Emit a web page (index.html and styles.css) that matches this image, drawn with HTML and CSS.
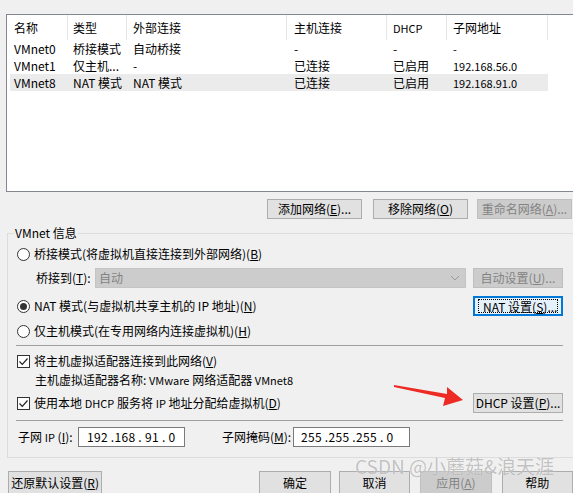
FILE: index.html
```html
<!DOCTYPE html>
<html>
<head>
<meta charset="utf-8">
<link rel="stylesheet" href="styles.css">
</head>
<body>
<div class="page">
  <div class="list">
    <div class="hdr">
      <div class="hc c1">名称</div>
      <div class="hc c2">类型</div>
      <div class="hc c3">外部连接</div>
      <div class="hc c4">主机连接</div>
      <div class="hc c5">DHCP</div>
      <div class="hc c6">子网地址</div>
    </div>
    <div class="row">
      <div class="rc c1">VMnet0</div>
      <div class="rc c2">桥接模式</div>
      <div class="rc c3">自动桥接</div>
      <div class="rc c4">-</div>
      <div class="rc c5">-</div>
      <div class="rc c6">-</div>
    </div>
    <div class="row">
      <div class="rc c1">VMnet1</div>
      <div class="rc c2">仅主机...</div>
      <div class="rc c3">-</div>
      <div class="rc c4">已连接</div>
      <div class="rc c5">已启用</div>
      <div class="rc c6">192.168.56.0</div>
    </div>
    <div class="row sel">
      <div class="rc c1">VMnet8</div>
      <div class="rc c2">NAT 模式</div>
      <div class="rc c3">NAT 模式</div>
      <div class="rc c4">已连接</div>
      <div class="rc c5">已启用</div>
      <div class="rc c6">192.168.91.0</div>
    </div>
  </div>

  <div class="netbtns">
    <div class="btn w95">添加网络(<u>E</u>)...</div>
    <div class="btn w95">移除网络(<u>O</u>)</div>
    <div class="btn w95 dis">重命名网络(<u>A</u>)...</div>
  </div>

  <fieldset class="group">
    <legend class="gl">VMnet 信息</legend>
    <div class="gin">
      <div class="line r1">
        <span class="radio"></span><span class="lbl">桥接模式(将虚拟机直接连接到外部网络)(<u>B</u>)</span>
      </div>
      <div class="line r2">
        <span class="blbl">桥接到(<u>T</u>):</span>
        <div class="combo"><span class="ctext">自动</span>
          <svg class="chev" width="10" height="6" viewBox="0 0 10 6"><path d="M1 1 L5 5 L9 1" fill="none" stroke="#9a9a9a" stroke-width="1"/></svg>
        </div>
        <div class="btn w90 dis">自动设置(<u>U</u>)...</div>
      </div>
      <div class="line r3">
        <span class="radio on"><span class="dot"></span></span><span class="lbl">NAT 模式(与虚拟机共享主机的 IP 地址)(<u>N</u>)</span>
        <div class="btn w90 focus"><span class="fr">NAT 设置(<u>S</u>)...</span></div>
      </div>
      <div class="line r4">
        <span class="radio"></span><span class="lbl">仅主机模式(在专用网络内连接虚拟机)(<u>H</u>)</span>
      </div>
      <div class="sep s1"></div>
      <div class="line r5">
        <span class="check"><svg width="11" height="11" viewBox="0 0 11 11"><path d="M1.5 5.5 L4.3 8.3 L9.5 2.5" fill="none" stroke="#222" stroke-width="1.2"/></svg></span><span class="lbl">将主机虚拟适配器连接到此网络(<u>V</u>)</span>
      </div>
      <div class="line r6">
        <span class="aname">主机虚拟适配器名称: <span class="sm">VMware</span> 网络适配器 <span class="sm">VMnet8</span></span>
      </div>
      <div class="line r7">
        <span class="check"><svg width="11" height="11" viewBox="0 0 11 11"><path d="M1.5 5.5 L4.3 8.3 L9.5 2.5" fill="none" stroke="#222" stroke-width="1.2"/></svg></span><span class="lbl">使用本地 <span class="sm">DHCP</span> 服务将 <span class="sm">IP</span> 地址分配给虚拟机(<u>D</u>)</span>
        <div class="btn w90">DHCP 设置(<u>P</u>)...</div>
      </div>
      <div class="sep s2"></div>
      <div class="line r8">
        <span class="slbl">子网 <span class="sm">IP</span> (<u>I</u>):</span>
        <div class="ipbox ip1">192 .168 . 91 . 0</div>
        <span class="mlbl">子网掩码(<u>M</u>):</span>
        <div class="ipbox ip2">255 .255 .255 . 0</div>
      </div>
    </div>
  </fieldset>

  <div class="bottom">
    <div class="btn w95 b1">还原默认设置(<u>R</u>)</div>
    <div class="btn w72 b2">确定</div>
    <div class="btn w72 b3">取消</div>
    <div class="btn w72 b4 dis">应用(<u>A</u>)</div>
    <div class="btn w72 b5">帮助</div>
  </div>

  <svg class="arrow" width="80" height="30" viewBox="0 0 80 30">
    <polygon points="4,5 57,14 57,7 73,20 53,26 55,18 4,7" fill="#ee2a24"/>
  </svg>
  <div class="wm">CSDN @小蘑菇&amp;浪天涯</div>
</div>
</body>
</html>
```

FILE: styles.css
```css
html, body {
  margin: 0;
  padding: 0;
}
body {
  background: #f0f0f0;
  width: 573px;
  height: 493px;
  overflow: hidden;
  font-family: "Noto Sans CJK SC", "Microsoft YaHei", sans-serif;
  font-size: 12px;
  color: #000;
}
.page {
  position: relative;
  width: 573px;
  height: 493px;
  padding-top: 14px;
  box-sizing: border-box;
}
u { text-decoration: underline; text-underline-offset: 1px; }

.list {
  margin-left: 6px;
  width: 600px;
  height: 178px;
  box-sizing: border-box;
  border: 1px solid #828790;
  background: #fff;
}
.hdr {
  display: flex;
  height: 25px;
  align-items: stretch;
}
.hc {
  box-sizing: border-box;
  border-right: 1px solid #e5e5e5;
  padding-left: 6px;
  display: flex;
  align-items: center;
  line-height: 14px;
  padding-top: 1px;
}
.hc.c1 { width: 61px; padding-left: 7px; }
.hc.c2 { width: 59px; padding-left: 5px; }
.c3 { width: 160px; }
.c4 { width: 100px; }
.c5 { width: 60px; }
.c6 { width: 101px; }
.hc.c4 { padding-left: 7px; }
.hc.c5 { font-size: 11px; }
.row {
  display: flex;
  height: 17px;
  margin-left: 3px;
  width: 538px;
  align-items: center;
  line-height: 14px;
}
.row.sel { background: #ebebeb; }
.rc { box-sizing: border-box; padding-left: 6px; white-space: nowrap; }
.rc.c1 { width: 58px; padding-left: 4px; }
.rc.c2 { width: 59px; padding-left: 5px; }
.rc.c4 { padding-left: 7px; }
.rc.c6 { font-size: 11px; }

.btn {
  box-sizing: border-box;
  height: 20px;
  border: 1px solid #adadad;
  background: #e1e1e1;
  display: flex;
  align-items: center;
  justify-content: center;
  white-space: nowrap;
  line-height: 14px;
}
.btn.dis {
  background: #cccccc;
  border-color: #bfbfbf;
  color: #838383;
}
.btn.focus {
  background: #e5f1fb;
  border: 2px solid #0078d7;
}
.btn.focus .fr {
  border: 1px dotted #000;
  padding: 1px 4px;
  width: 80px;
  box-sizing: border-box;
  text-align: center;
  height: 14px;
  line-height: 12px;
}
.w95 { width: 95px; }
.w90 { width: 90px; }
.w72 { width: 72px; }

.netbtns {
  display: flex;
  margin-top: 7px;
  padding-left: 267px;
  gap: 11px;
}
.netbtns .btn:nth-child(3) { margin-left: -2px; }

.group {
  margin: 7px 0 0 7px;
  padding: 4px 0 10px 6px;
  width: 590px;
  box-sizing: border-box;
  border: 1px solid #dcdcdc;
  min-inline-size: 0;
}
.gl {
  padding: 0 1px;
  line-height: 14px;
  height: 14px;
}
.gin {
  width: 549px;
  display: flex;
  flex-direction: column;
}
.line {
  display: flex;
  align-items: center;
  height: 20px;
  line-height: 14px;
  white-space: nowrap;
}
.r2 { margin-top: 4px; padding-left: 22px; }
.r3 { margin-top: 8px; justify-content: flex-start; }
.r3 .btn, .r7 .btn { margin-left: auto; }
.r4 { margin-top: 5px; }
.r5 { margin-top: 5px; }
.r6 { height: 18px; padding-left: 21px; }
.r7 { margin-top: 4px; }
.r8 { margin-top: 6px; padding-left: 4px; }

.radio {
  box-sizing: border-box;
  width: 13px;
  height: 13px;
  border: 1px solid #333;
  border-radius: 50%;
  background: #fff;
  margin-left: 3px;
  margin-right: 4px;
  display: flex;
  align-items: center;
  justify-content: center;
  flex: none;
}
.radio .dot {
  width: 7px;
  height: 7px;
  border-radius: 50%;
  background: #333;
}
.check {
  box-sizing: border-box;
  width: 13px;
  height: 13px;
  border: 1px solid #333;
  background: #fff;
  margin-left: 3px;
  margin-right: 4px;
  display: flex;
  align-items: center;
  justify-content: center;
  flex: none;
}
.check svg { display: block; }
.sm { font-size: 11px; }

.blbl { width: 59px; }
.combo {
  box-sizing: border-box;
  width: 371px;
  height: 20px;
  background: #cccccc;
  border: 1px solid #c4c4c4;
  display: flex;
  align-items: center;
  padding-left: 3px;
  color: #838383;
}
.ctext { flex: 1; }
.chev { margin-right: 5px; }
.r2 .btn { margin-left: auto; }

.sep {
  height: 1px;
  background: #a0a0a0;
  margin-left: 2px;
  width: 547px;
}
.s1 { margin-top: 4px; }
.s2 { margin-top: 7px; }

.ipbox {
  box-sizing: border-box;
  height: 20px;
  border: 1px solid #7a7a7a;
  background: #fff;
  white-space: pre;
  display: flex;
  align-items: center;
  padding-left: 8px;
  letter-spacing: 0.3px;
}
.slbl { width: 60px; }
.ip1 { width: 107px; }
.mlbl { margin-left: 37px; width: 71px; }
.ip2 { width: 117px; padding-left: 7px; }

.bottom {
  display: flex;
  margin-top: 13px;
  padding-left: 8px;
  align-items: flex-start;
}
.bottom .btn { height: 23px; }
.b2 { margin-left: 157px; }
.b3 { margin-left: 8px; }
.b4 { margin-left: 10px; }
.b5 { margin-left: 10px; }

.arrow {
  position: absolute;
  left: 390px;
  top: 380px;
}
.wm {
  position: absolute;
  left: 355px;
  top: 454px;
  font-size: 19px;
  line-height: 24px;
  color: rgba(120, 120, 120, 0.45);
  text-shadow: 0 0 1px rgba(255, 255, 255, 0.9);
  white-space: nowrap;
}
```
